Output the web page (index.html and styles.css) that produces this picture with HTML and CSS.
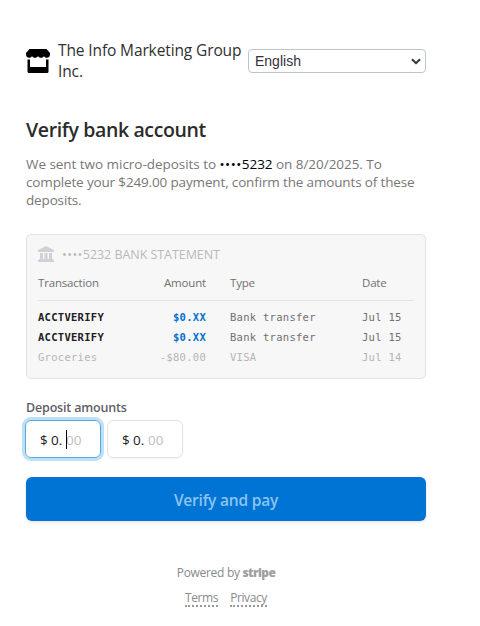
FILE: index.html
```html
<!DOCTYPE html>
<html lang="en">
<head>
<meta charset="utf-8">
<title>Verify bank account</title>
<link rel="stylesheet" href="styles.css">
</head>
<body>
<main class="page">
  <header class="header">
    <svg class="shop-icon" viewBox="0 0 24 24" width="24" height="24">
      <path d="M3.500 0h17L24 4v1.500c0 2-1.400 3.300-3.200 3.300-1.300 0-2.300-.7-2.800-1.500-.6.8-1.600 1.500-3 1.500S12.600 8.100 12 7.300c-.6.8-1.600 1.500-3 1.500S6.600 8.100 6 7.300c-.5.8-1.500 1.500-2.800 1.500C1.400 8.800 0 7.500 0 5.500V4z"/>
      <path d="M1.500 10.500H4V18h16v-7.500h2.500v12q0 1.500-1.500 1.500H3q-1.500 0-1.500-1.500z"/>
    </svg>
    <div class="merchant">The Info Marketing Group<br>Inc.</div>
    <div class="language"><span>English</span>
      <svg class="chevron" viewBox="0 0 10 7" width="10" height="7"><path d="M1 1.200l4 4 4-4"/></svg>
    </div>
  </header>
  <h1 class="title">Verify bank account</h1>
  <p class="intro"><span class="line first">We sent two micro-deposits to <span class="account"><span class="dots">••••</span>5232</span> on 8/20/2025. To</span><span class="line">complete your $249.00 payment, confirm the amounts of these</span><span class="line">deposits.</span></p>
  <section class="statement">
    <div class="statement-title">
      <svg viewBox="0 0 16 16" width="16" height="16"><path d="M8 0l8 4v2H0V4zM2 7h3v6H2zM6.500 7h3v6h-3zM11 7h3v6h-3zM1 13h14v1H1zM0 14h16v2H0z"/></svg>
      <span><span class="dots">••••</span>5232 BANK STATEMENT</span>
    </div>
    <div class="row head"><span>Transaction</span><span class="amount">Amount</span><span>Type</span><span>Date</span></div>
    <div class="rows">
      <div class="row"><b>ACCTVERIFY</b><b class="amount blue">$0.XX</b><span>Bank transfer</span><span>Jul 15</span></div>
      <div class="row"><b>ACCTVERIFY</b><b class="amount blue">$0.XX</b><span>Bank transfer</span><span>Jul 15</span></div>
      <div class="row faded"><span>Groceries</span><span class="amount">-$80.00</span><span>VISA</span><span>Jul 14</span></div>
    </div>
  </section>
  <div class="label">Deposit amounts</div>
  <div class="fields">
    <div class="field focused"><span class="prefix">$ 0.</span><span class="placeholder">00</span><i class="caret"></i></div>
    <div class="field"><span class="prefix">$ 0.</span><span class="placeholder">00</span></div>
  </div>
  <button class="submit">Verify and pay</button>
  <footer class="footer">
    <div class="powered">Powered by <span class="stripe">stripe</span></div>
    <div class="links"><a>Terms</a><a>Privacy</a></div>
  </footer>
</main>
</body>
</html>
```
FILE: styles.css
```css
* { box-sizing: border-box; }
body { margin: 0; background: #fff; font-family: "Open Sans", "Noto Sans", sans-serif; color: #30313d; }
.page { width: 400px; margin: 40px 0 0 26px; white-space: nowrap; }
.header { display: flex; height: 42px; align-items: center; }
.shop-icon { margin-right: 8px; fill: #000; flex: none; }
.merchant { width: 190px; font-size: 15.5px; line-height: 21px; letter-spacing: -0.12px; color: #303030; }
.language { display: flex; align-items: center; justify-content: space-between; width: 178px; height: 24px; padding: 0 4px 0 6px; border: 1px solid #bac4d0; border-radius: 4px; font: 14px "Liberation Sans", sans-serif; color: #30313d; }
.chevron { fill: none; stroke: #30313d; stroke-width: 2; }
.title { margin: 34px 0 0; font-size: 19.5px; line-height: 28px; font-weight: 600; letter-spacing: -0.37px; color: #2b2b2b; }
.intro { margin: 11px 0 0; font-size: 13.5px; line-height: 18px; letter-spacing: -0.15px; color: #777; }
.line { display: block; }
.first { letter-spacing: -0.04px; }
.account { color: #000; }
.dots { letter-spacing: 0.5px; }
.statement { height: 145px; margin-top: 25px; padding: 10px 11px 0; background: #f7f7f7; border: 1px solid #e3e3e3; border-radius: 5px; }
.statement-title { display: flex; gap: 8px; height: 18px; align-items: center; font-size: 12.5px; letter-spacing: -0.05px; color: #b9b9bd; }
.statement-title svg { fill: #d0d0d7; }
.row { display: grid; grid-template-columns: 84px 84px 133px 52px; line-height: 20px; }
.row > :nth-child(3) { padding-left: 24px; }
.row > :nth-child(4) { padding-left: 23px; }
.amount { text-align: right; }
.head { height: 28px; margin-top: 10px; border-bottom: 1px solid #e3e3e3; font-size: 11.5px; letter-spacing: -0.18px; color: #707070; }
.rows { padding-top: 6px; font: 10.5px "DejaVu Sans Mono", monospace; letter-spacing: 0.28px; color: #707070; }
.rows b { color: #202020; }
.rows .blue { color: #0570d2; }
.rows .faded { color: #b5b5b5; }
.label { margin-top: 20px; font-size: 12.5px; line-height: 18px; font-weight: 600; letter-spacing: -0.17px; color: #606066; }
.fields { display: flex; gap: 6px; margin: 3px 0 0 -1px; }
.field { position: relative; display: flex; width: 76px; height: 38px; gap: 4px; padding: 2px 0 0 14px; align-items: center; border: 1px solid #e2e2e2; border-radius: 6px; font-size: 13.5px; letter-spacing: -0.1px; color: #202020; box-shadow: 0 1px 2px #0000000a; }
.focused { border-color: #56a9df; box-shadow: 0 0 0 3px #bce0f5; }
.placeholder { color: #bebebe; }
.caret { position: absolute; left: 40px; top: 9px; width: 1px; height: 19px; background: #000; }
.submit { display: block; width: 400px; height: 44px; margin-top: 19px; padding: 2px 0 0; border: 0; border-radius: 6px; background: #0074d4; color: #8dc4ef; font: 600 15.5px "Open Sans", sans-serif; letter-spacing: -0.2px; box-shadow: 0 1px 3px #0002; }
.footer { margin-top: 43px; text-align: center; font-size: 12px; line-height: 18px; letter-spacing: -0.3px; color: #8a8a8a; }
.stripe { font-weight: 800; letter-spacing: -0.6px; color: #a0a0a0; }
.links { display: flex; justify-content: center; gap: 12px; margin-top: 8px; }
.links a { line-height: 15px; border-bottom: 2px dotted #999; letter-spacing: -0.4px; }
```
